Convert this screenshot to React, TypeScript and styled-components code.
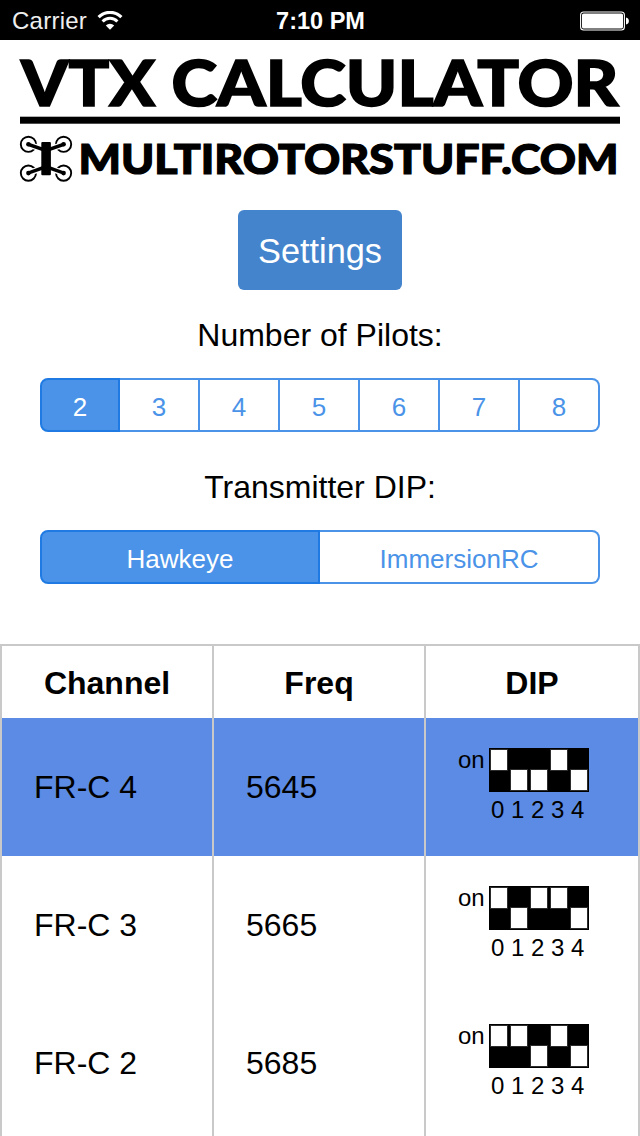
import React, { useState } from "react";
import styled, { createGlobalStyle } from "styled-components";

const GlobalStyle = createGlobalStyle`
  * { box-sizing: border-box; }
  body {
    margin: 0;
    background: #fff;
    color: #000;
    font-family: "Liberation Sans", Arial, sans-serif;
  }
`;

const Screen = styled.div`
  width: 640px;
  height: 1136px;
  overflow: hidden;
  display: flex;
  flex-direction: column;
  background: #fff;
`;

const StatusBar = styled.header`
  flex: none;
  height: 40px;
  padding: 0 11px 0 12px;
  display: grid;
  grid-template-columns: 1fr auto 1fr;
  align-items: center;
  background: #000;
  color: #fff;
  font-size: 24px;
  line-height: 40px;
`;

const Carrier = styled.div`
  display: flex;
  align-items: center;
  gap: 10px;
  letter-spacing: 0.25px;
  height: 40px;
  padding-top: 1px;
  color: #eee;
`;

const Clock = styled.div`
  font-weight: 700;
  font-size: 23.5px;
  padding-top: 1px;
`;

const BatterySlot = styled.div`
  display: flex;
  justify-content: flex-end;
`;

const Brand = styled.h1`
  flex: none;
  margin: 0;
  height: 170px;
  svg { display: block; }
`;

const SettingsButton = styled.button`
  flex: none;
  align-self: center;
  width: 164px;
  height: 80px;
  padding: 2px 0 0;
  border: 0;
  border-radius: 6px;
  background: #4484cd;
  color: #fff;
  font: 34.3px "Liberation Sans", Arial, sans-serif;
`;

const Field = styled.section`
  flex: none;
  height: 152px;
  padding: 26px 40px 0;
`;

const Label = styled.div`
  height: 62px;
  line-height: 38px;
  font-size: 32px;
  text-align: center;
`;

const Segments = styled.div`
  display: grid;
  grid-auto-flow: column;
  grid-auto-columns: minmax(0, 1fr);
  height: 54px;
`;

const Segment = styled.button<{ $active: boolean }>`
  min-width: 0;
  padding: 5px 0 0;
  border: 2px solid ${(p) => (p.$active ? "#1f7be3" : "#4a93e8")};
  border-left-width: 0;
  background: ${(p) => (p.$active ? "#4a93e8" : "#fff")};
  color: ${(p) => (p.$active ? "#fff" : "#4a93e8")};
  font: 26px "Liberation Sans", Arial, sans-serif;
  &:first-child {
    border-left-width: 2px;
    border-radius: 8px 0 0 8px;
  }
  &:last-child { border-radius: 0 8px 8px 0; }
`;

const Table = styled.div`
  flex: 1 0 0;
  min-height: 0;
  display: flex;
  flex-direction: column;
  margin-top: 50px;
  border: 2px solid #c9c9c9;
  border-bottom: 0;
`;

const Row = styled.div<{ $selected?: boolean; $fill?: boolean }>`
  flex: ${(p) => (p.$fill ? "1 0 0" : "none")};
  display: grid;
  grid-template-columns: 212px 212px 1fr;
  background: ${(p) => (p.$selected ? "#5b8be4" : "#fff")};
`;

const HeadCell = styled.div`
  height: 72px;
  padding-top: 2px;
  line-height: 70px;
  font-size: 32px;
  font-weight: 700;
  text-align: center;
  border-right: 2px solid #c9c9c9;
  &:last-child { border-right: 0; }
`;

const Cell = styled.div`
  height: 138px;
  padding-left: 32px;
  line-height: 138px;
  font-size: 32px;
  border-right: 2px solid #c9c9c9;
  &:last-child { border-right: 0; }
`;

const DipCell = styled(Cell)`
  display: grid;
  grid-template-columns: 31px 100px;
  grid-template-rows: 44px 36px;
  padding-top: 30px;
  font-size: 24px;
  line-height: 23px;
`;

const DipOn = styled.span``;

const DipBody = styled.div`
  height: 44px;
  padding: 1px 0 2px;
  display: grid;
  grid-template-columns: repeat(5, 20px);
  background: #000;
`;

const DipSwitch = styled.i<{ $on: boolean }>`
  width: 16px;
  height: 20px;
  margin-left: 2px;
  margin-top: ${(p) => (p.$on ? 1 : 21)}px;
  background: #fff;
  box-shadow: 0 0 0 1px #2c2c2c;
`;

const DipNumbers = styled.span`
  grid-column: 2;
  padding-left: 2px;
  line-height: 36px;
  white-space: nowrap;
`;

const WifiIcon = () => (
  <svg width="26" height="20" viewBox="0 0 26 20" fill="none" stroke="#fff">
    <path d="M1.6 6.1a16 16 0 0 1 22.8 0" strokeWidth="3.1" />
    <path d="M5.6 10.5a10.3 10.3 0 0 1 14.8 0" strokeWidth="3" />
    <path d="M8.8 14.5a6 6 0 0 1 8.4 0L13 18.7z" fill="#fff" stroke="none" />
  </svg>
);

const BatteryIcon = () => (
  <svg width="49" height="20" viewBox="0 0 49 20">
    <rect x="0.6" y="1" width="43.8" height="18" rx="3" fill="none" stroke="#fff" strokeWidth="1.1" />
    <rect x="2" y="2.5" width="41" height="15" rx="1.6" fill="#fff" />
    <path d="M46 6.5c2 .5 2.9 1.7 2.9 3.5S48 13 46 13.5z" fill="#fff" />
  </svg>
);

const rotors = [
  [28.4, 104.3, 1, 1],
  [63.6, 104.3, -1, 1],
  [28.4, 133.1, 1, -1],
  [63.6, 133.1, -1, -1],
];

const Logo = () => (
  <svg width="640" height="170" viewBox="0 0 640 170" fontFamily="Lato, sans-serif" fontWeight="900">
    <g fontSize="62.5" stroke="#000" strokeWidth="1.6">
      <text x="21" y="66" textLength="134" lengthAdjust="spacingAndGlyphs">VTX</text>
      <text x="171.5" y="66" textLength="447" lengthAdjust="spacingAndGlyphs">CALCULATOR</text>
    </g>
    <rect x="20" y="76.7" width="600" height="7" />
    {rotors.map(([x, y, sx, sy]) => (
      <g key={`${x}-${y}`} transform={`translate(${x} ${y}) scale(${sx} ${sy})`}>
        <circle r="7.6" fill="none" stroke="#000" strokeWidth="1.9" />
        <path d="M4 1.5L9.5 3.3" stroke="#fff" strokeWidth="6" />
        <circle r="2.3" />
        <path d="M0 -1.7L15 3.5V7.3L-.8 1.7z" />
      </g>
    ))}
    <rect x="41.3" y="102" width="9.6" height="33.3" rx="1" />
    <text x="78.500" y="133.700" fontSize="41" stroke="#000" strokeWidth="1.2" textLength="540" lengthAdjust="spacingAndGlyphs">
      MULTIROTORSTUFF.COM
    </text>
  </svg>
);

const pilots = ["2", "3", "4", "5", "6", "7", "8"];
const transmitters = ["Hawkeye", "ImmersionRC"];
const channels = [
  { name: "FR-C 4", freq: "5645", dip: "10010" },
  { name: "FR-C 3", freq: "5665", dip: "10110" },
  { name: "FR-C 2", freq: "5685", dip: "11010" },
];

type PickerProps = {
  label: string;
  options: string[];
  value: string;
  onChange: (value: string) => void;
};

const Picker = ({ label, options, value, onChange }: PickerProps) => (
  <Field>
    <Label>{label}</Label>
    <Segments>
      {options.map((o) => (
        <Segment key={o} $active={o === value} onClick={() => onChange(o)}>
          {o}
        </Segment>
      ))}
    </Segments>
  </Field>
);

export default function App() {
  const [count, setCount] = useState("2");
  const [transmitter, setTransmitter] = useState("Hawkeye");
  const [selected, setSelected] = useState("FR-C 4");
  return (
    <Screen>
      <GlobalStyle />
      <StatusBar>
        <Carrier>Carrier <WifiIcon /></Carrier>
        <Clock>7:10 PM</Clock>
        <BatterySlot><BatteryIcon /></BatterySlot>
      </StatusBar>
      <Brand><Logo /></Brand>
      <SettingsButton>Settings</SettingsButton>
      <Picker label="Number of Pilots:" options={pilots} value={count} onChange={setCount} />
      <Picker label="Transmitter DIP:" options={transmitters} value={transmitter} onChange={setTransmitter} />
      <Table>
        <Row>
          <HeadCell>Channel</HeadCell>
          <HeadCell>Freq</HeadCell>
          <HeadCell>DIP</HeadCell>
        </Row>
        {channels.map((c) => (
          <Row key={c.name} $selected={c.name === selected} onClick={() => setSelected(c.name)}>
            <Cell>{c.name}</Cell>
            <Cell>{c.freq}</Cell>
            <DipCell>
              <DipOn>on</DipOn>
              <DipBody>
                {c.dip.split("").map((bit, i) => (
                  <DipSwitch key={i} $on={bit === "1"} />
                ))}
              </DipBody>
              <DipNumbers>0 1 2 3 4</DipNumbers>
            </DipCell>
          </Row>
        ))}
        <Row $fill>
          <Cell />
          <Cell />
          <Cell />
        </Row>
      </Table>
    </Screen>
  );
}
